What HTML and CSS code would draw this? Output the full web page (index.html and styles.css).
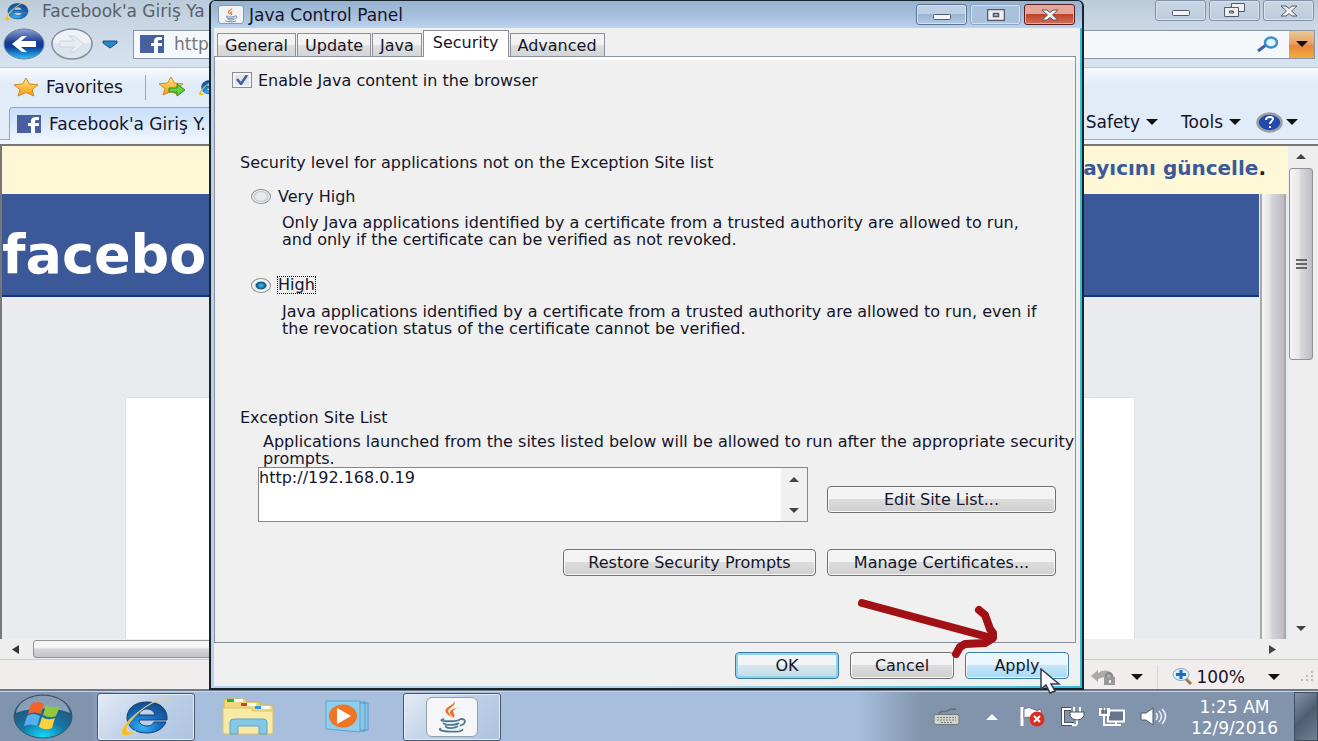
FILE: index.html
```html
<!DOCTYPE html>
<html lang="en">
<head>
    <meta charset="UTF-8">
    <meta name="viewport" content="width=device-width, initial-scale=1.0">
    <title>Java Control Panel</title>
    <link rel="stylesheet" href="styles.css">
</head>
<body>

<!-- Shared icons -->
<svg class="defs" aria-hidden="true">
    <defs>
        <linearGradient id="blueBall" x1="0" y1="0" x2="0" y2="1">
            <stop offset="0" stop-color="#8d9fd0"/><stop offset=".45" stop-color="#173a94"/><stop offset=".6" stop-color="#0b3e9d"/><stop offset="1" stop-color="#2cc4f5"/>
        </linearGradient>
        <linearGradient id="gold" x1="0" y1="0" x2="0" y2="1">
            <stop offset="0" stop-color="#ffe680"/><stop offset="1" stop-color="#f59a11"/>
        </linearGradient>
        <radialGradient id="ieBlue" cx=".4" cy=".8" r=".8">
            <stop offset="0" stop-color="#35b6f5"/><stop offset=".5" stop-color="#176fc4"/><stop offset="1" stop-color="#164a86"/>
        </radialGradient>
        <radialGradient id="orb" cx=".5" cy="1" r=".9">
            <stop offset="0" stop-color="#12e4ff"/><stop offset=".45" stop-color="#1478a8"/><stop offset="1" stop-color="#2a4868"/>
        </radialGradient>
        <symbol id="ie" viewBox="0 0 54 40">
            <path d="M28 5C15 5 8 12 8 21s8 15 20 15c9 0 16-4 19-11H35c-1 3-4 4-7 4-5 0-8-3-8-6h28c1-11-7-18-20-18zm-8 13c1-4 4-6 8-6s7 2 8 6z" fill="url(#ieBlue)" stroke="#123f74"/>
            <path d="M51 5C49-2 35 3 22 13 8 23-1 35 4 38c3 2 9-1 13-4-5 1-8 2-9 0-2-4 6-14 16-22C36 3 47 0 51 5z" fill="#f5bd20" stroke="#e0d9a0" stroke-width=".7"/>
        </symbol>
        <symbol id="java" viewBox="0 0 32 32">
            <path d="M18 1c3 5-8 7-5 11 1 2 2 3 2 4-3-2-6-4-5-7 1-3 8-4 8-8z" fill="#f0702a"/>
            <path d="M22 7c-5 2-6 4-4 6 1 2 0 3-1 4 0-2-3-3-3-5 0-3 4-4 8-5z" fill="#f0702a"/>
            <g fill="none" stroke="#4d7896" stroke-width="1.7" stroke-linecap="round">
                <path d="M8 18c-4 1-2 2 6 2 5 0 9-1 10-2 5-1 6 4 0 6M8 22c2 2 11 2 14 0M10 25c2 2 8 2 11 0M5 27c-4 3 20 4 21 1"/>
            </g>
        </symbol>
        <symbol id="fb" viewBox="0 0 24 18">
            <path d="M0 0h24v18H0z" fill="#4860a0"/>
            <path d="M14 18v-7h-3V8h3V6q0-4 5-4h3v3h-2q-2 0-2 1v2h4v3h-4v7z" fill="#fff"/>
        </symbol>
        <symbol id="star" viewBox="0 0 26 20">
            <path d="M13 1l3.500 6 8.500.8-6 5L21 19l-8-3.500L5 19l2-6.200-6-5L9.500 7z" fill="url(#gold)" stroke="#d08b1f"/>
        </symbol>
        <symbol id="close" viewBox="0 0 18 12">
            <path d="M1 1h5l3 2.500L12 1h5l-5.500 5 5.500 5h-5L9 8.500 6 11H1l5.500-5z" fill="#f4f4f6" stroke="#535a6b"/>
        </symbol>
        <symbol id="dash" viewBox="0 0 18 6">
            <rect x=".5" y=".5" width="17" height="5" rx="1" fill="#f4f4f6" stroke="#535a6b"/>
        </symbol>
        <symbol id="max" viewBox="0 0 18 12">
            <path d="M.5.5h17v11H.5zM6.500 4.500v3h5v-3z" fill="#eee" fill-rule="evenodd" stroke="#535a6b" stroke-width="1.500"/>
        </symbol>
        <symbol id="down" viewBox="0 0 12 6"><path d="M0 0h12L6 6z" fill="currentColor"/></symbol>
        <symbol id="up" viewBox="0 0 12 6"><path d="M0 6h12L6 0z" fill="currentColor"/></symbol>
    </defs>
</svg>

<div class="desktop">

    <!-- Browser window -->
    <div class="browser">
        <div class="browser-title">
            <svg class="title-ie"><use href="#ie"/></svg>
            <span>Facebook'a Giriş Ya</span>
            <div class="window-buttons">
                <button aria-label="Minimize"><svg class="dash-icon"><use href="#dash"/></svg></button>
                <button aria-label="Restore"><svg width="22" height="15" viewBox="0 0 22 15"><path d="M7.500.5h13v8h-13z" fill="#eee" stroke="#535a6b"/><path d="M.5 4.500h14v9H.5zM5.500 8v2h4V8z" fill="#eee" fill-rule="evenodd" stroke="#535a6b"/></svg></button>
                <button aria-label="Close"><svg class="close-icon"><use href="#close"/></svg></button>
            </div>
        </div>

        <div class="nav-bar">
            <button class="plain" aria-label="Back"><svg width="42" height="32" viewBox="0 0 42 32"><ellipse cx="21" cy="16" rx="20" ry="15" fill="url(#blueBall)" stroke="#6f7f9c"/><path d="M9 16l10-8h5l-6 5h15v6H18l6 5h-5z" fill="#fff"/></svg></button>
            <button class="plain" aria-label="Forward"><svg width="42" height="32" viewBox="0 0 42 32"><ellipse cx="21" cy="16" rx="20" ry="15" fill="#dce5ee" stroke="#828e9c" stroke-width="1.500"/><path d="M2 15a19 13 0 0 1 38 0z" fill="#eef2f6"/><path d="M33 16L23 8h-5l6 5H9v6h15l-6 5h5z" fill="#e8edf2" stroke="#ccd6df"/></svg></button>
            <button class="plain recent" aria-label="Recent pages"><svg width="16" height="9" viewBox="0 0 16 9"><path d="M1 1h14v2L8 8 1 3z" fill="#2388c5" stroke="#1b4e7d"/></svg></button>
            <div class="address">
                <svg class="fb-icon"><use href="#fb"/></svg>
                <input type="text" value="http" aria-label="Address">
            </div>
            <div class="search">
                <svg width="22" height="17" viewBox="0 0 22 17"><path d="M1 15l8-6" stroke="#3e5fae" stroke-width="3"/><ellipse cx="14" cy="6.500" rx="6" ry="5" fill="#e3f6fc" stroke="#3b90cc" stroke-width="2.500"/></svg>
                <button aria-label="Search options"><svg class="arrow"><use href="#down"/></svg></button>
            </div>
        </div>

        <div class="favorites-bar">
            <button class="plain favorites"><svg class="star-icon"><use href="#star"/></svg>Favorites</button>
            <span class="divider"></span>
            <svg width="28" height="22" viewBox="0 0 28 22"><use href="#star" width="26" height="20"/><path d="M11 12h8V8l8 6-8 6v-4h-8z" fill="#67d13e" stroke="#258a25"/></svg>
            <svg class="small-ie"><use href="#ie"/></svg>
        </div>

        <div class="tab-bar">
            <div class="browser-tab"><svg class="fb-icon"><use href="#fb"/></svg>Facebook'a Giriş Y.</div>
            <div class="commands">
                <button class="plain">Safety<svg class="arrow"><use href="#down"/></svg></button>
                <button class="plain">Tools<svg class="arrow"><use href="#down"/></svg></button>
                <button class="plain help" aria-label="Help"><svg width="27" height="21" viewBox="0 0 27 21"><ellipse cx="13.500" cy="10.500" rx="12" ry="9" fill="#2449ad" stroke="#9b9fa8" stroke-width="2.500"/><path d="M10 8q0-3 4-3 3 0 3 2c0 2-3 2-3 5M14 14v2" fill="none" stroke="#fff" stroke-width="2"/></svg><svg class="arrow"><use href="#down"/></svg></button>
            </div>
        </div>

        <div class="viewport">
            <div class="page">
                <div class="notice"><a href="#">ayıcını güncelle</a>.</div>
                <div class="page-row">
                    <div class="site">
                        <header class="site-header">facebo</header>
                        <main class="site-body"><div class="card"></div></main>
                    </div>
                    <div class="inner-scroll"></div>
                </div>
            </div>
            <div class="v-scroll">
                <svg class="scroll-arrow"><use href="#up"/></svg>
                <div class="v-thumb"><i></i><i></i><i></i></div>
                <svg class="scroll-arrow"><use href="#down"/></svg>
            </div>
        </div>
        <div class="h-scroll">
            <svg width="7" height="9" viewBox="0 0 7 9"><path d="M7 0v9L0 4.500z" fill="#333"/></svg>
            <div class="h-thumb"></div>
            <svg width="7" height="9" viewBox="0 0 7 9"><path d="M0 0v9l7-4.500z" fill="#444"/></svg>
        </div>

        <div class="status-bar">
            <svg width="27" height="18" viewBox="0 0 27 18"><path d="M1 8l7-6v3q12-7 17 6-7-5-17 0v3z" fill="#aaa"/><path d="M14 9h11v8H14z" fill="#999"/><path d="M16 9V7q3-4 6 0v2" fill="none" stroke="#888" stroke-width="2"/><path d="M19 12h2v3h-2z" fill="#eee"/></svg>
            <svg class="arrow"><use href="#down"/></svg>
            <span class="status-divider"></span>
            <button class="plain zoom"><svg width="21" height="17" viewBox="0 0 21 17"><path d="M13 10l6 6" stroke="#a8794b" stroke-width="3"/><ellipse cx="9" cy="6.500" rx="8" ry="6" fill="#dceefa" stroke="#8ba4bb"/><path d="M9 2v9M4 6.500h10" stroke="#1c6bc4" stroke-width="3"/></svg>100%<svg class="arrow"><use href="#down"/></svg></button>
            <svg width="13" height="11" viewBox="0 0 13 11" fill="#b9b9b9"><path d="M10 0h2v2h-2zM5 4h2v2H5zM10 4h2v2h-2zM0 8h2v2H0zM5 8h2v2H5zM10 8h2v2h-2z"/></svg>
        </div>
    </div>

    <!-- Java Control Panel -->
    <div class="dialog">
        <div class="dialog-title">
            <span class="java-badge"><svg width="20" height="16"><use href="#java"/></svg></span>
            <h1>Java Control Panel</h1>
            <div class="window-buttons">
                <button aria-label="Minimize"><svg class="dash-icon"><use href="#dash"/></svg></button>
                <button class="disabled" aria-label="Maximize"><svg class="close-icon"><use href="#max"/></svg></button>
                <button class="red" aria-label="Close"><svg class="close-icon"><use href="#close"/></svg></button>
            </div>
        </div>

        <div class="dialog-body">
            <div class="tabs" role="tablist">
                <button class="tab" role="tab">General</button>
                <button class="tab" role="tab">Update</button>
                <button class="tab" role="tab">Java</button>
                <button class="tab active" role="tab" aria-selected="true">Security</button>
                <button class="tab" role="tab">Advanced</button>
            </div>

            <div class="panel">
                <label class="check-row"><input type="checkbox" checked>Enable Java content in the browser</label>

                <p class="section-title level-title">Security level for applications not on the Exception Site list</p>
                <label class="radio-row"><input type="radio" name="level"><span>Very High</span></label>
                <p class="description">Only Java applications identified by a certificate from a trusted authority are allowed to run,<br>and only if the certificate can be verified as not revoked.</p>
                <label class="radio-row"><input type="radio" name="level" checked><span class="focused">High</span></label>
                <p class="description last">Java applications identified by a certificate from a trusted authority are allowed to run, even if<br>the revocation status of the certificate cannot be verified.</p>

                <p class="section-title">Exception Site List</p>
                <p class="list-text">Applications launched from the sites listed below will be allowed to run after the appropriate security<br>prompts.</p>
                <div class="list-row">
                    <div class="site-list">
                        <ul><li>http://192.168.0.19</li></ul>
                        <div class="list-scroll">
                            <svg class="arrow"><use href="#up"/></svg>
                            <svg class="arrow"><use href="#down"/></svg>
                        </div>
                    </div>
                    <button class="button side">Edit Site List...</button>
                </div>
                <div class="button-row">
                    <button class="button restore">Restore Security Prompts</button>
                    <button class="button side">Manage Certificates...</button>
                </div>
            </div>

            <div class="dialog-actions">
                <button class="button default">OK</button>
                <button class="button">Cancel</button>
                <button class="button hover">Apply</button>
            </div>
        </div>

        <!-- Hand-drawn arrow and mouse pointer -->
        <svg class="red-arrow" width="142" height="62" viewBox="0 0 142 62"><g fill="none" stroke="#a01014" stroke-width="8" stroke-linecap="round" stroke-linejoin="round"><path d="M5 7L131 41"/><path d="M122 14l6 5 5 14 3 4v5l-8 5-20 1-5 3-4 7"/></g></svg>
        <svg class="pointer" width="22" height="26" viewBox="0 0 22 26"><path d="M1 1v20l5-4 4 8 5-2-4-7h8z" fill="#fff" stroke="#333a4c" stroke-width="1.500"/></svg>
    </div>

    <!-- Taskbar -->
    <div class="taskbar">
        <button class="start" aria-label="Start"><svg width="60" height="45" viewBox="0 0 60 45"><ellipse cx="30" cy="22.500" rx="29" ry="21.500" fill="url(#orb)" stroke="#35506b"/><path d="M3 19C7-4 53-4 57 19c-14-6-40-6-54 0z" fill="#d5e2ee" opacity=".55"/><path d="M18 10q6-4 13 0l-3 10q-6-3-13 0z" fill="#f0632a"/><path d="M33 11q6 4 14 1l-4 10q-6 3-13-1z" fill="#92c83e"/><path d="M14 22q6-4 13 0l-3 10q-6-3-13 0z" fill="#59aef0"/><path d="M29 23q6 4 13 1l-3 10q-6 3-13-1z" fill="#fcd13c"/></svg></button>
        <button class="task open" aria-label="Internet Explorer"><svg width="54" height="40"><use href="#ie"/></svg></button>
        <button class="task" aria-label="Windows Explorer"><svg width="54" height="38" viewBox="0 0 54 38"><path d="M3 3q0-2 2-2h20v3h14v3h11q2 0 2 2v26H3z" fill="#f0d67c" stroke="#d7b657"/><path d="M6 1h7v3H6z" fill="#1dba22"/><path d="M13 1h9v3h-9zM26 5h9v3h-9zM40 8h9v3h-9z" fill="#fff"/><path d="M20 5h6v3h-6z" fill="#cf4024"/><path d="M34 8h6v3h-6z" fill="#2a9dec"/><path d="M2 10h27l3 3h20v21q0 2-2 2H4q-2 0-2-2z" fill="#f8e9a4" stroke="#dcc26d"/><path d="M9 36V24q0-3 4-3h29q4 0 4 3v12h-8v-8H17v8z" fill="#83c8e6" stroke="#5aa7cc"/></svg></button>
        <button class="task" aria-label="Media Player"><svg width="50" height="33" viewBox="0 0 50 33"><path d="M30 3h13v27H30zM26 2h14v29H26z" fill="#8cc6e6" stroke="#4c9cc9"/><path d="M1 1h34v31L1 29z" fill="#8fcdec" stroke="#5ba5cf"/><ellipse cx="18" cy="16" rx="14" ry="11.500" fill="#f07522"/><path d="M12 8l14 8-14 8z" fill="#fff"/></svg></button>
        <button class="task open" aria-label="Java Control Panel"><span class="java-tile"><svg width="42" height="34"><use href="#java"/></svg></span></button>

        <div class="tray">
            <svg width="27" height="18" viewBox="0 0 27 18"><path d="M6 6c1-5 5-1 8-3s4-2 9-2" fill="none" stroke="#686b72" stroke-width="1.500"/><rect x="1" y="6.500" width="25" height="10" rx="2" fill="#d2d2ce" stroke="#73767b"/><path d="M4 9.500h19M4 12h19M8 14.500h11" stroke="#80817d" stroke-dasharray="2 1"/></svg>
            <svg width="14" height="6" color="#f5f7fa"><use href="#up"/></svg>
            <svg width="27" height="21" viewBox="0 0 27 21"><path d="M3 1v19" stroke="#fff" stroke-width="3"/><path d="M5 3q5-3 9 0t8 0v9q-5 2-9 0t-8 0z" fill="#fff" stroke="#596375" stroke-width=".8"/><circle cx="18" cy="13" r="7.500" fill="#da2b24"/><path d="M15 10l6 6m0-6l-6 6" stroke="#fff" stroke-width="2"/></svg>
            <svg width="25" height="21" viewBox="0 0 25 21"><g fill="none" stroke="#465164" stroke-width="4"><path d="M11 3H3v15h11"/></g><g fill="none" stroke="#fff" stroke-width="2"><path d="M11 3H3v15h11M14 1v6M20 1v6M17 13v4q0 3-5 2"/></g><path d="M10 6h14v4q-2 4-7 4t-7-4z" fill="#fff" stroke="#465164"/></svg>
            <svg width="27" height="20" viewBox="0 0 27 20"><path d="M9 3.500h16v11H9z" fill="#66768e" stroke="#fff" stroke-width="2"/><path d="M1 2h9v6H1zM5 8v10h17M17 15v3" fill="none" stroke="#fff" stroke-width="2"/><path d="M4 1v5m3-5v5" stroke="#3f4b60"/></svg>
            <svg width="27" height="19" viewBox="0 0 27 19"><path d="M1 6h5l7-5v17l-7-5H1z" fill="#fff" stroke="#4a566b"/><path d="M16 6q3 3 0 7M19 4q5 5 0 11M22 2q7 7 0 15" fill="none" stroke="#eef" stroke-width="1.500"/></svg>
        </div>
        <div class="clock"><span>1:25 AM</span><span>12/9/2016</span></div>
        <button class="show-desktop" aria-label="Show desktop"></button>
    </div>
</div>

</body>
</html>
```
FILE: styles.css
```css
* {
    box-sizing: border-box;
}

body {
    margin: 0;
    height: 100vh;
    overflow: hidden;
    font-family: "DejaVu Sans", sans-serif;
    font-size: 17px;
    color: #15152a;
}

button {
    padding: 0;
    font-family: inherit;
    font-size: inherit;
    color: inherit;
}

svg {
    display: block;
    flex: none;
}

p, h1, ul {
    margin: 0;
    padding: 0;
    font-weight: normal;
    list-style: none;
}

.defs {
    position: absolute;
    width: 0;
    height: 0;
}

.desktop {
    position: relative;
    display: flex;
    flex-direction: column;
    height: 100%;
}

.plain {
    display: flex;
    align-items: center;
    border: none;
    background: none;
}

.arrow {
    width: 12px;
    height: 6px;
    color: #111;
}

/* Browser window */
.browser {
    flex: 1;
    min-height: 0;
    display: flex;
    flex-direction: column;
    background: #e1ecf8;
    white-space: nowrap;
}

.browser-title {
    display: flex;
    align-items: center;
    height: 21px;
    padding: 0 4px;
    gap: 11px;
    background: linear-gradient(#bccbda, #c8d5e3);
    color: #57616e;
}

.title-ie {
    width: 27px;
    height: 20px;
}

.window-buttons {
    display: flex;
    gap: 3px;
    margin-left: auto;
}

.window-buttons button {
    display: flex;
    align-items: center;
    justify-content: center;
    width: 51px;
    height: 21px;
    border: 1px solid #8291a8;
    border-radius: 3px;
    background: linear-gradient(#c8d5e5, #becddd);
    box-shadow: inset 0 0 0 1px #d6e2f0;
}

.close-icon {
    width: 18px;
    height: 12px;
}

.dash-icon {
    width: 18px;
    height: 6px;
    margin-top: 4px;
}

.nav-bar {
    display: flex;
    align-items: center;
    height: 47px;
    padding: 0 3px;
    gap: 6px;
    background: linear-gradient(#c8d5e3, #d8e3f0);
    border-bottom: 1px solid #b7c7da;
}

.recent {
    margin: 0 9px 0 3px;
}

.address, .search {
    display: flex;
    align-items: center;
    height: 29px;
    border: 1px solid #8b96a5;
    background: #f5f8fb;
}

.address {
    flex: 1;
    padding-left: 6px;
    gap: 10px;
}

.fb-icon {
    width: 24px;
    height: 18px;
}

.address input {
    width: 60px;
    border: none;
    padding: 0;
    background: none;
    font: inherit;
    color: #74777b;
}

.search {
    width: 260px;
    justify-content: flex-end;
    gap: 10px;
}

.search button {
    display: flex;
    align-items: center;
    justify-content: center;
    width: 25px;
    height: 27px;
    border: none;
    background: linear-gradient(#e8c995, #e8a367 45%, #e9853c 55%, #f2ad3b);
}

.favorites-bar {
    display: flex;
    align-items: center;
    height: 38px;
    padding: 0 13px;
    background: linear-gradient(#f5f9fe, #e1ecf8 45%);
    gap: 12px;
}

.favorites {
    gap: 7px;
    margin-right: 10px;
}

.star-icon {
    width: 26px;
    height: 20px;
}

.divider {
    width: 1px;
    height: 25px;
    background: #9ba3ad;
}

.small-ie {
    width: 24px;
    height: 18px;
}

.tab-bar {
    display: flex;
    align-items: flex-end;
    height: 38px;
    border-bottom: 4px solid #eef4fb;
    box-shadow: inset 0 -1px #a2adbb;
}

.browser-tab {
    display: flex;
    align-items: center;
    gap: 8px;
    width: 240px;
    height: 33px;
    margin-left: 9px;
    padding-left: 7px;
    border: 1px solid #98a4b5;
    border-bottom: none;
    border-radius: 4px 0 0 0;
    background: linear-gradient(#c6ddf9, #eef5fd);
}

.commands {
    display: flex;
    align-items: center;
    gap: 23px;
    height: 36px;
    margin-left: auto;
    padding-right: 20px;
}

.commands button {
    gap: 6px;
}

.commands .help {
    gap: 3px;
    margin-left: -8px;
}

.viewport {
    flex: 1;
    min-height: 0;
    display: flex;
    border-top: 2px solid #777;
    border-left: 2px solid #777;
}

.page {
    flex: 1;
    display: flex;
    flex-direction: column;
}

.notice {
    height: 48px;
    padding-right: 22px;
    line-height: 44px;
    background: #fff8d7;
    text-align: right;
    font-size: 20px;
    font-weight: bold;
    color: #222;
}

.notice a {
    color: #3b5998;
    text-decoration: none;
}

.page-row {
    flex: 1;
    display: flex;
}

.site {
    flex: 1;
    display: flex;
    flex-direction: column;
    background: #e9ebee;
}

.site-header {
    height: 103px;
    line-height: 121px;
    border-bottom: 2px solid #133783;
    background: #3b5998;
    color: #fff;
    font-size: 54px;
    font-weight: bold;
}

.site-body {
    flex: 1;
    display: flex;
    padding: 100px 124px 0 123px;
}

.card {
    flex: 1;
    border: 1px solid #dfe1e5;
    border-bottom: none;
    background: #fff;
}

.inner-scroll {
    width: 26px;
    margin: 0 2px 0 1px;
    border: 2px solid #a9a9a9;
    border-width: 0 2px;
    background: linear-gradient(90deg, #f5f5f5, #e4e4e4 35%, #d4d4d7 45%, #bcbcc2);
}

.v-scroll {
    display: flex;
    flex-direction: column;
    align-items: center;
    width: 30px;
    padding: 8px 4px 8px 0;
    background: #eee;
}

.scroll-arrow {
    width: 12px;
    height: 5px;
    color: #444;
}

.v-thumb {
    display: flex;
    flex-direction: column;
    align-items: center;
    justify-content: center;
    gap: 2px;
    width: 24px;
    height: 192px;
    margin: 9px 0 auto;
    border: 1px solid #929292;
    border-radius: 3px;
    background: linear-gradient(90deg, #f5f5f5, #e8e8e8 40%, #d8d8dc 50%, #bcbcc2);
}

.v-thumb i {
    width: 11px;
    height: 2px;
    background: #666;
}

.h-scroll {
    display: flex;
    align-items: center;
    gap: 14px;
    height: 20px;
    padding: 0 42px 0 12px;
    background: #eee;
}

.h-thumb {
    width: 640px;
    height: 18px;
    margin-right: auto;
    border: 1px solid #929292;
    border-radius: 3px;
    background: linear-gradient(#f5f5f5 40%, #d8d8dc 50%, #c2c2c7);
}

.status-bar {
    display: flex;
    align-items: center;
    justify-content: flex-end;
    gap: 14px;
    height: 32px;
    padding: 4px 4px 0;
    border-top: 1px solid #c9c9c9;
    border-bottom: 2px solid #6f7a88;
    background: #f1edec;
}

.status-divider {
    width: 1px;
    height: 24px;
    background: #d5d5d5;
}

.zoom {
    gap: 3px;
}

.zoom .arrow {
    margin: 0 7px 0 20px;
}

/* Java Control Panel */
.dialog {
    position: absolute;
    top: 0;
    right: 234px;
    bottom: 51px;
    left: 209px;
    display: flex;
    flex-direction: column;
    padding: 0 2px 2px 3px;
    border: 2px solid #16242c;
    border-top-width: 1px;
    border-radius: 6px 6px 0 0;
    background: linear-gradient(90deg, #b9d1ea 50%, #35bcd6);
    font-size: 16px;
}

.dialog-title {
    display: flex;
    align-items: center;
    height: 27px;
    margin: 0 -2px 0 -3px;
    padding: 0 7px;
    gap: 5px;
    border-radius: 5px 5px 0 0;
    background: linear-gradient(#98b3d1, #a4bedb 50%, #bad3ee);
}

.dialog-title h1 {
    font-size: 17px;
}

.java-badge {
    display: flex;
    align-items: center;
    justify-content: center;
    width: 26px;
    height: 19px;
    border: 1px solid #8b98a8;
    border-radius: 3px;
    background: #f2f3f4;
}

.dialog-title .window-buttons button {
    border-color: #5e7590;
    background: linear-gradient(#bdd0e6 48%, #99b4d2 50%, #b1cae5);
}

.dialog-title .window-buttons .disabled {
    border-color: #8ba5c3;
    background: #a9c1dc;
}

.dialog-title .window-buttons .red {
    border-color: #5b1c1c;
    background: linear-gradient(#e5a69a 45%, #be4329 50%, #d37058);
    box-shadow: inset 0 0 0 1px #e7aba0;
}

.dialog-body {
    flex: 1;
    min-height: 0;
    display: flex;
    flex-direction: column;
    padding: 1px 4px 7px 0;
    background: #f0f0f0;
}

.tabs {
    display: flex;
    align-items: flex-end;
    gap: 1px;
    height: 27px;
    padding-left: 3px;
}

.tab {
    height: 23px;
    padding: 0 7px;
    border: 1px solid #8a8f98;
    border-bottom: none;
    background: linear-gradient(#f3f3f3 45%, #dedede 55%, #d5d5d5);
}

.tab.active {
    position: relative;
    height: 27px;
    padding: 0 9px 3px;
    margin-bottom: -1px;
    background: #fff;
}

.panel {
    flex: 1;
    min-height: 0;
    padding: 14px 19px 0 25px;
    border: 1px solid #8a919e;
    box-shadow: inset 0 3px #fff;
}

.check-row {
    display: flex;
    align-items: center;
    gap: 6px;
    height: 18px;
    margin-left: -8px;
}

.check-row input {
    appearance: none;
    width: 20px;
    height: 16px;
    margin: 0;
    border: 1px solid #8b8e92;
    background: #dfe5ec url("data:image/svg+xml,%3Csvg xmlns='http://www.w3.org/2000/svg' viewBox='0 0 18 14'%3E%3Cpath d='M4 6l4 5 6-9' fill='none' stroke='%23475d9b' stroke-width='2.5'/%3E%3C/svg%3E");
    box-shadow: inset 0 0 0 2px #f4f4f4;
}

.section-title {
    line-height: 18px;
}

.level-title {
    margin-top: 65px;
}

.radio-row {
    display: flex;
    align-items: center;
    gap: 7px;
    height: 18px;
    margin: 15px 0 9px 11px;
}

.radio-row input {
    appearance: none;
    width: 20px;
    height: 15px;
    margin: 0;
    border: 1px solid #8a8d91;
    border-radius: 50%;
    background: radial-gradient(#e8eaec 40%, #c4c8cc 55%, #fafafa 65%);
}

.radio-row input:checked {
    background: radial-gradient(ellipse at center, #2bb7e2 8%, #12537d 38%, #d9dfe4 46%, #fafafa 60%);
}

.radio-row .focused {
    line-height: 16px;
    outline: 1px dotted #000;
}

.description {
    margin: 0 0 28px 42px;
    line-height: 17px;
    white-space: nowrap;
}

.description + .radio-row {
    margin-top: 0;
}

.description.last {
    margin-bottom: 72px;
}

.list-text {
    margin: 6px 0 0 23px;
    line-height: 17px;
    white-space: nowrap;
}

.list-row {
    display: flex;
    align-items: flex-start;
    gap: 19px;
    margin-left: 18px;
}

.site-list {
    flex: 1;
    display: flex;
    height: 55px;
    border: 1px solid #828790;
    background: #fff;
}

.site-list ul {
    flex: 1;
}

.list-scroll {
    display: flex;
    flex-direction: column;
    align-items: center;
    justify-content: space-between;
    width: 26px;
    padding: 9px 0 8px;
    background: #f0f0f0;
}

.list-scroll .arrow {
    height: 5px;
    color: #444;
}

.button {
    width: 104px;
    height: 27px;
    border: 1px solid #707070;
    border-radius: 4px;
    background: linear-gradient(#f3f3f3 48%, #dcdcdc 50%, #cfcfcf);
    box-shadow: inset 0 0 0 1px #fafafa;
}

.button.side {
    width: 229px;
}

.list-row .side {
    margin-top: 19px;
}

.button.restore {
    width: 253px;
}

.button.default {
    border-color: #3d7ba5;
    background: linear-gradient(#f1f5f7 48%, #d7e7ed 50%, #bfdbe5);
    box-shadow: inset 0 0 0 2px #8fd4ec;
}

.button.hover {
    border-color: #3c7fb1;
    background: linear-gradient(#eaf6fd 48%, #c2e5f8 50%, #a9dbf6);
}

.button-row {
    display: flex;
    justify-content: flex-end;
    gap: 11px;
    margin-top: 27px;
}

.dialog-actions {
    display: flex;
    justify-content: flex-end;
    gap: 11px;
    padding: 9px 7px 0;
}

.red-arrow {
    position: absolute;
    right: 83px;
    bottom: 30px;
}

.pointer {
    position: absolute;
    right: 20px;
    bottom: -6px;
}

/* Taskbar */
.taskbar {
    display: flex;
    align-items: center;
    height: 50px;
    padding-left: 13px;
    border-top: 1px solid #c8d5e5;
    background: linear-gradient(90deg, #8094ae 90px, #a7bfdd 120px, #a7bfdd 65%, #8194ab 70%);
}

.start {
    border: none;
    background: none;
    margin-right: 24px;
}

.task {
    display: flex;
    align-items: center;
    justify-content: center;
    width: 98px;
    height: 48px;
    margin-right: 4px;
    border: 1px solid transparent;
    border-radius: 3px;
    background: none;
}

.task.open {
    border-color: #48566b;
    background: linear-gradient(135deg, #e4ebf4, #bed0e8 50%, #adc3df);
    box-shadow: inset 0 0 0 1px #e4edf8;
}

.java-tile {
    display: flex;
    align-items: center;
    justify-content: center;
    width: 52px;
    height: 40px;
    border: 1px solid #999fa8;
    border-radius: 6px;
    background: #f5f6f7;
}

.tray {
    display: flex;
    align-items: center;
    gap: 14px;
    margin-left: auto;
}

.tray svg:nth-child(2) {
    margin: 0 6px 0 11px;
}

.clock {
    display: flex;
    flex-direction: column;
    align-items: center;
    width: 127px;
    padding: 2px 0 0 8px;
    line-height: 21px;
    color: #fff;
}

.show-desktop {
    width: 24px;
    height: 49px;
    border: 1px solid #3f4d60;
    background: linear-gradient(135deg, #8495aa, #4d5c71 50%, #718298);
}
```
